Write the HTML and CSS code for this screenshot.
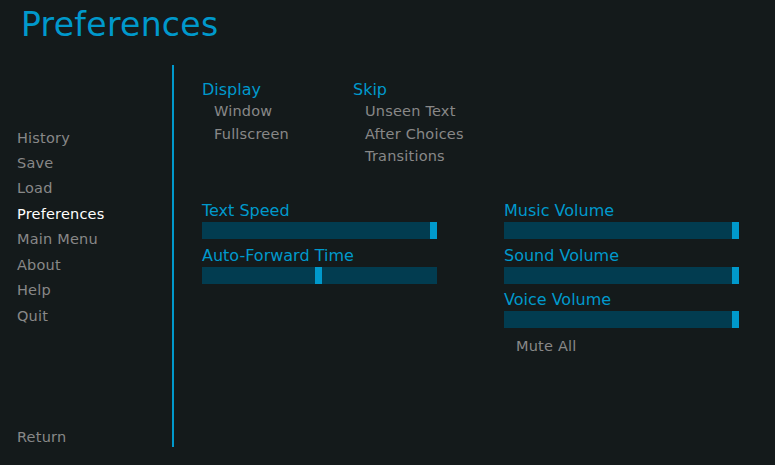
FILE: index.html
```html
<!DOCTYPE html>
<html>
<head>
<meta charset="utf-8">
<link rel="stylesheet" href="styles.css">
</head>
<body>
<h1 class="title">Preferences</h1>
<div class="main">
  <nav class="nav">
    <span class="nav-item">History</span>
    <span class="nav-item">Save</span>
    <span class="nav-item">Load</span>
    <span class="nav-item selected">Preferences</span>
    <span class="nav-item">Main Menu</span>
    <span class="nav-item">About</span>
    <span class="nav-item">Help</span>
    <span class="nav-item">Quit</span>
    <span class="nav-item return">Return</span>
  </nav>
  <div class="rule"></div>
  <div class="content">
    <div class="choices">
      <div class="choice-col">
        <div class="label">Display</div>
        <div class="option">Window</div>
        <div class="option">Fullscreen</div>
      </div>
      <div class="choice-col">
        <div class="label">Skip</div>
        <div class="option">Unseen Text</div>
        <div class="option">After Choices</div>
        <div class="option">Transitions</div>
      </div>
    </div>
    <div class="sliders">
      <div class="slider-col">
        <div class="label">Text Speed</div>
        <div class="bar"><div class="fill" style="width:228px"></div><div class="thumb"></div></div>
        <div class="label">Auto-Forward Time</div>
        <div class="bar"><div class="fill" style="width:113px"></div><div class="thumb"></div></div>
      </div>
      <div class="slider-col">
        <div class="label">Music Volume</div>
        <div class="bar"><div class="fill" style="width:228px"></div><div class="thumb"></div></div>
        <div class="label">Sound Volume</div>
        <div class="bar"><div class="fill" style="width:228px"></div><div class="thumb"></div></div>
        <div class="label">Voice Volume</div>
        <div class="bar"><div class="fill" style="width:228px"></div><div class="thumb"></div></div>
        <div class="option mute">Mute All</div>
      </div>
    </div>
  </div>
</div>
</body>
</html>
```

FILE: styles.css
```css
html, body {
  margin: 0;
  padding: 0;
  background: #141a1b;
  width: 775px;
  height: 465px;
  overflow: hidden;
  font-family: "DejaVu Sans", sans-serif;
}

.title {
  margin: 0;
  padding: 5px 0 0 21px;
  font-size: 33px;
  line-height: 40px;
  letter-spacing: 0.3px;
  font-weight: normal;
  color: #0099cc;
}

.main {
  display: flex;
  margin-top: 20px;
  height: 385px;
}

.nav {
  width: 155px;
  padding: 60.6px 0 0 17px;
  display: flex;
  flex-direction: column;
}

.nav-item {
  font-size: 14.5px;
  line-height: 25.43px;
  letter-spacing: 0.2px;
  color: #888888;
}

.nav-item.selected {
  color: #ffffff;
}

.nav-item.return {
  margin-top: auto;
}

.rule {
  width: 2px;
  height: 382px;
  background: #0099cc;
}

.content {
  padding: 13.5px 0 0 28px;
  display: flex;
  flex-direction: column;
}

.choices {
  display: flex;
}

.choice-col {
  width: 151px;
  display: flex;
  flex-direction: column;
}

.label {
  font-size: 16px;
  line-height: 22px;
  color: #0099cc;
}

.choices .label {
  line-height: 21.5px;
}

.option {
  font-size: 14.5px;
  line-height: 22.7px;
  letter-spacing: 0.2px;
  padding-left: 12px;
  color: #888888;
}

.sliders {
  display: flex;
  gap: 67px;
  margin-top: 32px;
}

.slider-col {
  width: 235px;
  display: flex;
  flex-direction: column;
}

.bar {
  height: 17px;
  background: #023c50;
  display: flex;
  margin-bottom: 5.5px;
}

.thumb {
  width: 7px;
  height: 17px;
  background: #0099cc;
}

.mute {
  margin-top: 1px;
}
```
